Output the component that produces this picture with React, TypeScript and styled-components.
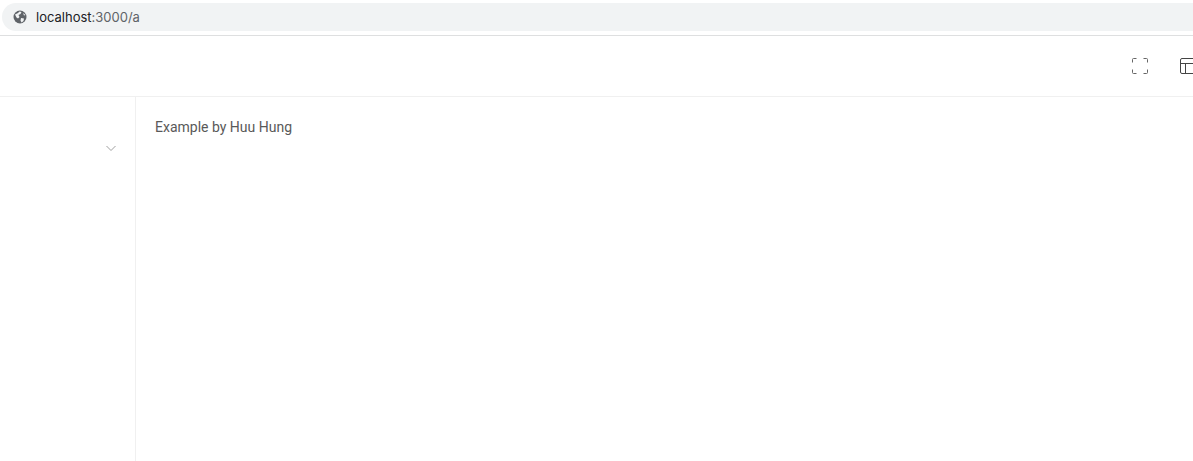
import React from 'react'
import styled, { createGlobalStyle } from 'styled-components'

const GlobalStyle = createGlobalStyle`
  html, body {
    margin: 0;
    padding: 0;
    height: 100%;
    overflow: hidden;
    background: #ffffff;
  }
`

const Page = styled.div`
  display: flex;
  flex-direction: column;
  width: 1193px;
  height: 461px;
  overflow: hidden;
  font-family: Roboto, 'Liberation Sans', sans-serif;
`

const BrowserBar = styled.div`
  flex: none;
  box-sizing: border-box;
  height: 36px;
  padding: 3px 0 5px 2px;
  border-bottom: 1px solid #dedfe0;
`

const AddressPill = styled.div`
  display: flex;
  align-items: center;
  height: 28px;
  padding-left: 11px;
  margin-right: -20px;
  border-radius: 14px;
  background: #f1f3f4;
`

const GlobeIcon = styled.svg`
  flex: none;
  width: 14px;
  height: 14px;
  margin-right: 9px;
`

const Url = styled.span`
  font-family: Inter, Roboto, sans-serif;
  font-size: 13px;
  color: #202124;
`

const UrlRest = styled.span`
  color: #5f6368;
`

const Toolbar = styled.div`
  flex: none;
  box-sizing: border-box;
  display: flex;
  align-items: center;
  justify-content: flex-end;
  gap: 30px;
  height: 61px;
  margin-right: -4px;
  border-bottom: 1px solid #f0f0f0;
`

const ToolIcon = styled.svg`
  flex: none;
  width: 18px;
  height: 18px;
  fill: none;
  stroke: ${props => props.stroke || '#666'};
  stroke-width: 1;
`

const Body = styled.div`
  flex: 1;
  display: flex;
`

const Sidebar = styled.aside`
  flex: none;
  box-sizing: border-box;
  width: 136px;
  padding: 45px 18px 0 0;
  display: flex;
  justify-content: flex-end;
  align-items: flex-start;
  border-right: 1px solid #f0f0f0;
`

const Chevron = styled.svg`
  width: 12px;
  height: 12px;
  fill: none;
  stroke: #a0a0a0;
  stroke-width: 1;
`

const Content = styled.main`
  flex: 1;
  padding: 22px 19px;
`

const Caption = styled.p`
  margin: 0;
  font-size: 14px;
  line-height: 16px;
  color: #595959;
`

export default function App() {
  return (
    <Page>
      <GlobalStyle />
      <BrowserBar>
        <AddressPill>
          <GlobeIcon viewBox="0 0 14 14">
            <circle cx="7" cy="7" r="6.5" fill="#5f6368" />
            <path
              d="M2 4.5 L5 3 L6.5 1.5 L8.5 2 L7.5 4 L5.5 5 L6.5 7 L5 8.5 L3.5 7.5 Z M8 8 L11 8.5 L10.5 11 L8.5 12.5 L7.5 10.5 Z M10 3 L12.5 5 L11 5.5 Z"
              fill="#f1f3f4"
            />
          </GlobeIcon>
          <Url>
            localhost<UrlRest>:3000/a</UrlRest>
          </Url>
        </AddressPill>
      </BrowserBar>
      <Toolbar>
        <ToolIcon viewBox="0 0 18 18">
          <path d="M1.5 5.5 V2.5 a1 1 0 0 1 1 -1 H5.5 M12.5 1.5 H15.5 a1 1 0 0 1 1 1 V5.5 M16.5 12.5 V15.5 a1 1 0 0 1 -1 1 H12.5 M5.5 16.5 H2.5 a1 1 0 0 1 -1 -1 V12.5" />
        </ToolIcon>
        <ToolIcon viewBox="0 0 18 18" stroke="#444">
          <rect x="1.5" y="1.5" width="15" height="15" rx="1.5" />
          <path d="M1.5 6.5 H16.5 M6.5 6.5 V16.5" />
        </ToolIcon>
      </Toolbar>
      <Body>
        <Sidebar>
          <Chevron viewBox="0 0 12 12">
            <path d="M1.5 4 L6 8.5 L10.5 4" />
          </Chevron>
        </Sidebar>
        <Content>
          <Caption>Example by Huu Hung</Caption>
        </Content>
      </Body>
    </Page>
  )
}
